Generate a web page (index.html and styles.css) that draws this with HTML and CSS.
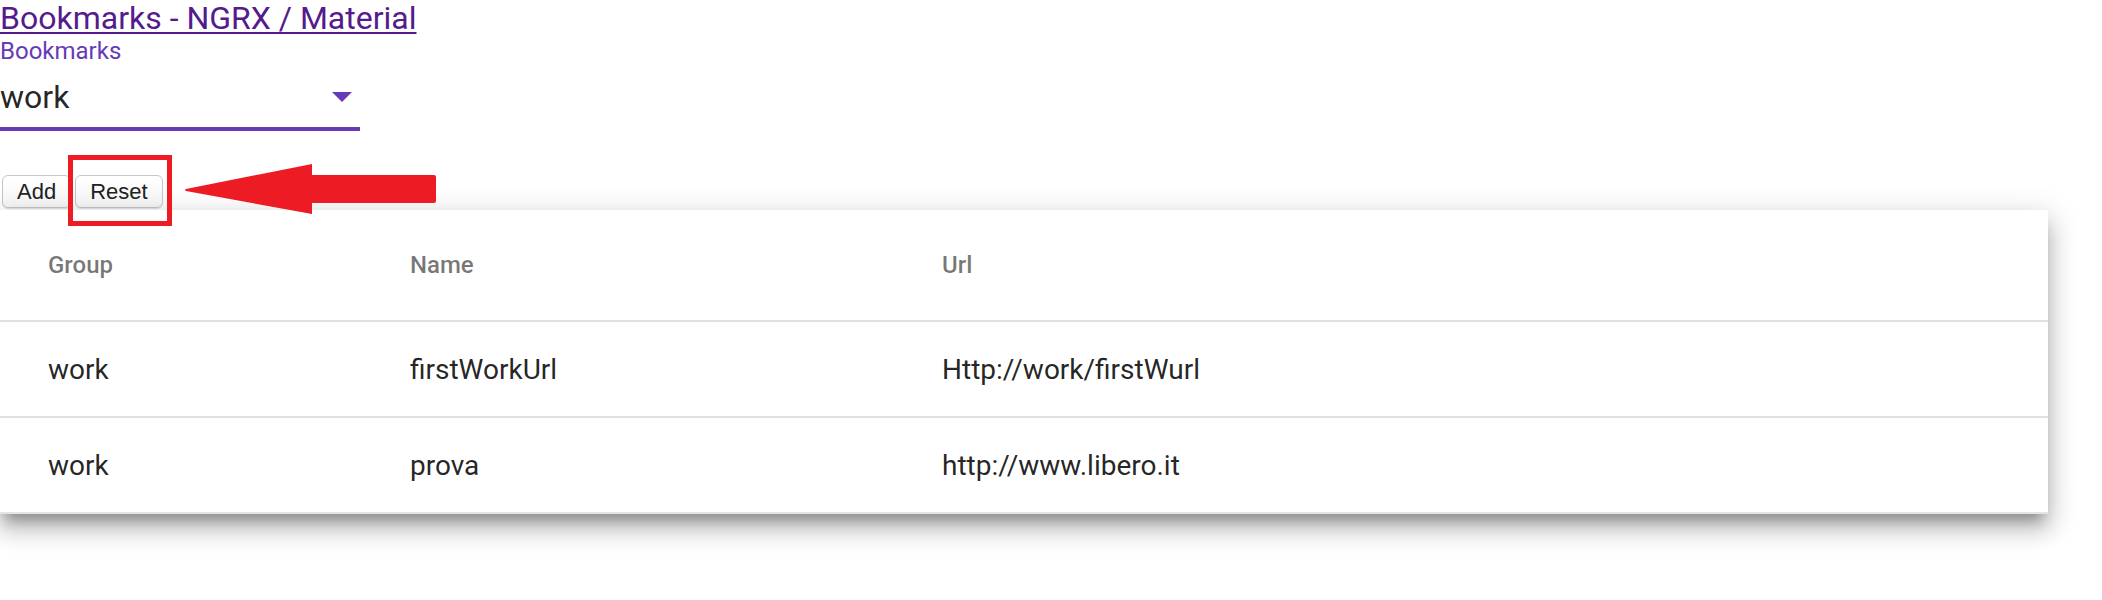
FILE: index.html
```html
<!DOCTYPE html>
<html>
<head>
<meta charset="utf-8">
<link rel="stylesheet" href="styles.css">
</head>
<body>
<div class="page">
  <a class="title" href="#">Bookmarks - NGRX / Material</a>
  <div class="field">
    <div class="field-label">Bookmarks</div>
    <div class="field-row">
      <span class="field-value">work</span>
      <span class="field-arrow"></span>
    </div>
    <div class="field-line"></div>
  </div>
  <div class="actions">
    <button class="btn">Add</button>
    <button class="btn">Reset</button>
  </div>
  <div class="card">
    <div class="trow thead">
      <div class="tcell">Group</div>
      <div class="tcell">Name</div>
      <div class="tcell">Url</div>
    </div>
    <div class="trow">
      <div class="tcell">work</div>
      <div class="tcell">firstWorkUrl</div>
      <div class="tcell">Http://work/firstWurl</div>
    </div>
    <div class="trow">
      <div class="tcell">work</div>
      <div class="tcell">prova</div>
      <div class="tcell">http://www.libero.it</div>
    </div>
  </div>
  <div class="highlight"></div>
  <svg class="pointer" width="260" height="60" viewBox="0 0 260 60">
    <path d="M6 29 Q4 30 6 31 L132 54 L132 43 L254 43 Q256 43 256 41 L256 17 Q256 15 254 15 L132 15 L132 4 Z" fill="#ed1c24"/>
  </svg>
</div>
</body>
</html>
```
FILE: styles.css
```css
html, body {
  margin: 0;
  padding: 0;
  background: #ffffff;
}
.page {
  position: relative;
  display: flex;
  flex-direction: column;
  align-items: flex-start;
  padding-bottom: 86px;
  font-family: Roboto, "Liberation Sans", sans-serif;
}
.title {
  font-size: 32px;
  line-height: 37px;
  color: #551a8b;
  text-decoration: underline;
  text-decoration-thickness: 2px;
  text-underline-offset: 3px;
}
.field {
  width: 360px;
  display: flex;
  flex-direction: column;
}
.field-label {
  font-size: 24px;
  line-height: 28px;
  color: #673ab7;
}
.field-row {
  margin-top: 13px;
  height: 38px;
  display: flex;
  align-items: center;
  justify-content: space-between;
  padding-right: 8px;
}
.field-value {
  font-size: 32px;
  line-height: 38px;
  color: rgba(0, 0, 0, 0.87);
}
.field-arrow {
  width: 0;
  height: 0;
  border-left: 10px solid transparent;
  border-right: 10px solid transparent;
  border-top: 10px solid #673ab7;
}
.field-line {
  margin-top: 11px;
  height: 4px;
  background: #673ab7;
}
.actions {
  margin-top: 44px;
  margin-left: 2px;
  display: flex;
  gap: 4px;
}
.btn {
  font-family: "Liberation Sans", Arial, sans-serif;
  font-size: 22px;
  color: #222222;
  height: 33px;
  padding: 0 14px;
  background: linear-gradient(#ffffff, #f7f7f7);
  border: 1px solid #c6c6c6;
  border-radius: 6px;
  box-shadow: 0 1px 1px rgba(0, 0, 0, 0.12);
}
.card {
  margin-top: 2px;
  width: 2048px;
  background: #ffffff;
  box-shadow: 0 12px 12px -6px rgba(0, 0, 0, 0.28), 0 16px 22px 2px rgba(0, 0, 0, 0.16), 0 6px 28px 4px rgba(0, 0, 0, 0.12);
}
.trow {
  display: grid;
  grid-template-columns: 410px 532px 1fr;
  align-items: center;
  height: 96px;
  border-bottom: 2px solid #e0e0e0;
  box-sizing: border-box;
  font-size: 28px;
  color: rgba(0, 0, 0, 0.87);
}
.trow:last-child {
  border-bottom: 2px solid #e4e4e4;
}
.trow.thead {
  height: 112px;
  font-size: 24px;
  font-weight: 500;
  color: rgba(0, 0, 0, 0.54);
}
.tcell:first-child {
  padding-left: 48px;
}
.highlight {
  position: absolute;
  left: 68px;
  top: 155px;
  width: 94px;
  height: 61px;
  border: 5px solid #ed1c24;
}
.pointer {
  position: absolute;
  left: 180px;
  top: 160px;
}
```
